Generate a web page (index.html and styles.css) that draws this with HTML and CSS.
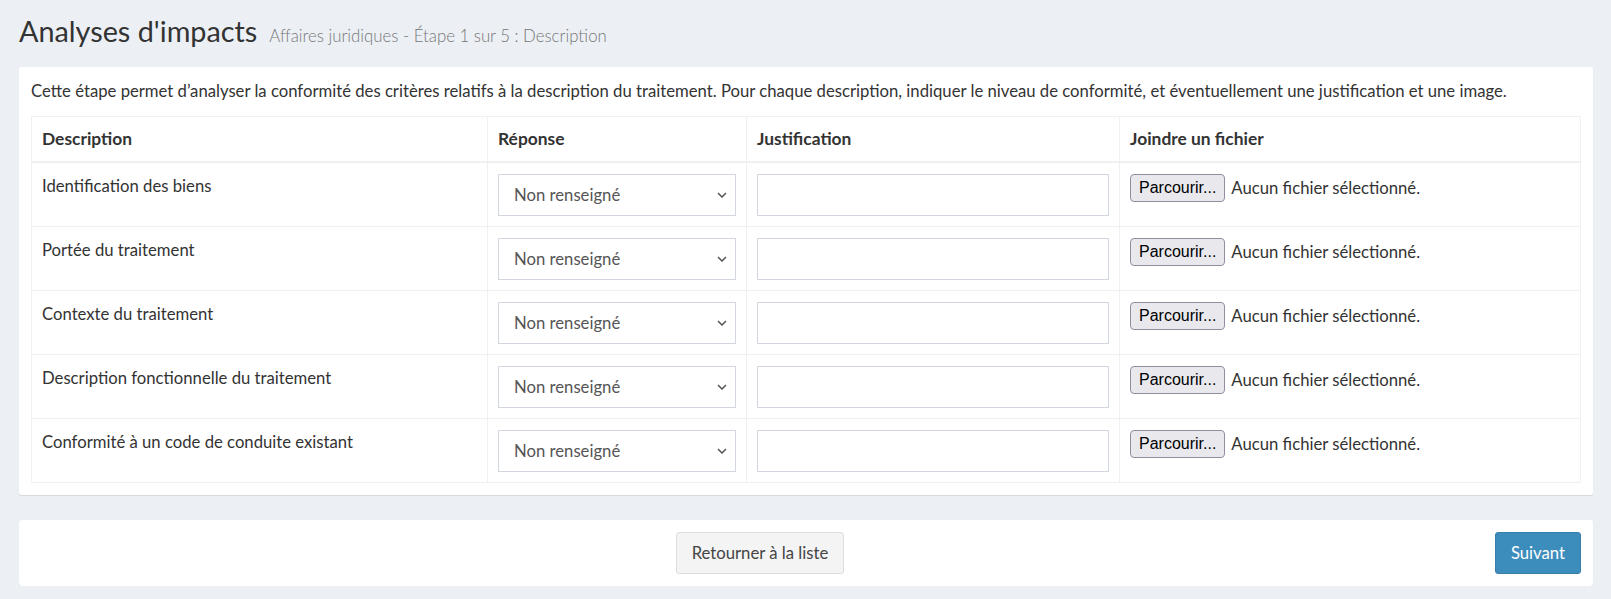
FILE: index.html
```html
<!DOCTYPE html>
<html lang="fr">
<head>
<meta charset="utf-8">
<title>Analyses d'impacts</title>
<link rel="stylesheet" href="styles.css">
</head>
<body>
<div class="page">
  <header class="page-header">
    <h1 class="page-title">Analyses d'impacts</h1>
    <span class="page-subtitle">Affaires juridiques - Étape 1 sur 5 : Description</span>
  </header>

  <section class="box">
    <p class="intro">Cette étape permet d’analyser la conformité des critères relatifs à la description du traitement. Pour chaque description, indiquer le niveau de conformité, et éventuellement une justification et une image.</p>
    <table class="grid">
      <colgroup>
        <col class="col-desc">
        <col class="col-resp">
        <col class="col-just">
        <col>
      </colgroup>
      <thead>
        <tr><th>Description</th><th>Réponse</th><th>Justification</th><th>Joindre un fichier</th></tr>
      </thead>
      <tbody>
        <tr>
          <td>Identification des biens</td>
          <td><div class="select-wrap"><select class="field"><option>Non renseigné</option></select><svg class="chevron" width="10" height="6" viewBox="0 0 10 6"><path d="M1 1l4 4 4-4" fill="none" stroke="#555" stroke-width="1.5"/></svg></div></td>
          <td><input class="field" type="text"></td>
          <td><div class="file"><button class="file-btn" type="button">Parcourir...</button><span class="file-name">Aucun fichier sélectionné.</span></div></td>
        </tr>
        <tr>
          <td>Portée du traitement</td>
          <td><div class="select-wrap"><select class="field"><option>Non renseigné</option></select><svg class="chevron" width="10" height="6" viewBox="0 0 10 6"><path d="M1 1l4 4 4-4" fill="none" stroke="#555" stroke-width="1.5"/></svg></div></td>
          <td><input class="field" type="text"></td>
          <td><div class="file"><button class="file-btn" type="button">Parcourir...</button><span class="file-name">Aucun fichier sélectionné.</span></div></td>
        </tr>
        <tr>
          <td>Contexte du traitement</td>
          <td><div class="select-wrap"><select class="field"><option>Non renseigné</option></select><svg class="chevron" width="10" height="6" viewBox="0 0 10 6"><path d="M1 1l4 4 4-4" fill="none" stroke="#555" stroke-width="1.5"/></svg></div></td>
          <td><input class="field" type="text"></td>
          <td><div class="file"><button class="file-btn" type="button">Parcourir...</button><span class="file-name">Aucun fichier sélectionné.</span></div></td>
        </tr>
        <tr>
          <td>Description fonctionnelle du traitement</td>
          <td><div class="select-wrap"><select class="field"><option>Non renseigné</option></select><svg class="chevron" width="10" height="6" viewBox="0 0 10 6"><path d="M1 1l4 4 4-4" fill="none" stroke="#555" stroke-width="1.5"/></svg></div></td>
          <td><input class="field" type="text"></td>
          <td><div class="file"><button class="file-btn" type="button">Parcourir...</button><span class="file-name">Aucun fichier sélectionné.</span></div></td>
        </tr>
        <tr>
          <td>Conformité à un code de conduite existant</td>
          <td><div class="select-wrap"><select class="field"><option>Non renseigné</option></select><svg class="chevron" width="10" height="6" viewBox="0 0 10 6"><path d="M1 1l4 4 4-4" fill="none" stroke="#555" stroke-width="1.5"/></svg></div></td>
          <td><input class="field" type="text"></td>
          <td><div class="file"><button class="file-btn" type="button">Parcourir...</button><span class="file-name">Aucun fichier sélectionné.</span></div></td>
        </tr>
      </tbody>
    </table>
  </section>

  <section class="box footer-box">
    <div class="footer-center"><button class="btn btn-default" type="button">Retourner à la liste</button></div>
    <button class="btn btn-primary" type="button">Suivant</button>
  </section>
</div>
</body>
</html>
```

FILE: styles.css
```css
* { box-sizing: border-box; }

body {
  margin: 0;
  background: #ecf0f5;
  font-family: Lato, "Liberation Sans", sans-serif;
  font-size: 16.7px;
  color: #333;
}

.page {
  padding: 15px 18px 0 19px;
}

.page-header {
  display: flex;
  align-items: baseline;
  gap: 12px;
  height: 33px;
  margin-bottom: 19px;
}

.page-title {
  margin: 0;
  font-size: 28.8px;
  font-weight: 400;
  line-height: 33px;
  color: #333;
}

.page-subtitle {
  font-size: 16.8px;
  font-weight: 300;
  color: #777;
}

.box {
  background: #fff;
  border-radius: 3px;
  box-shadow: 0 1px 1px rgba(0, 0, 0, 0.1);
  padding: 12px;
  margin-bottom: 25px;
}

.intro {
  margin: 0 0 13px;
  line-height: 24px;
}

.grid {
  width: 100%;
  border-collapse: collapse;
  table-layout: fixed;
  border: 1px solid #f0f0f0;
}

.col-desc { width: 456px; }
.col-resp { width: 259px; }
.col-just { width: 373px; }

.grid th,
.grid td {
  border: 1px solid #f0f0f0;
  text-align: left;
  vertical-align: top;
  line-height: 24px;
}

.grid th {
  padding: 10px 10px;
  font-size: 17.4px;
  font-weight: 700;
  border-bottom-width: 2px;
}

.grid td {
  padding: 11px 10px 10px;
}

.field {
  display: block;
  width: 100%;
  height: 42px;
  margin: 0;
  border: 1px solid #d2d6de;
  border-radius: 0;
  background: #fff;
  font: inherit;
  color: #555;
  padding: 0 30px 0 15px;
  appearance: none;
  -webkit-appearance: none;
  outline: none;
}

.select-wrap {
  position: relative;
}

.chevron {
  position: absolute;
  right: 9px;
  top: 18px;
  pointer-events: none;
}

.file {
  display: flex;
  align-items: center;
  gap: 6px;
}

.file-btn {
  height: 28px;
  padding: 0 8px;
  border: 1px solid #8f8f9d;
  border-radius: 4px;
  background: #e9e9ed;
  color: #000;
  font-family: "Liberation Sans", Arial, sans-serif;
  font-size: 16px;
}

.file-name {
  color: #333;
}

.footer-box {
  display: flex;
  align-items: center;
  gap: 6px;
  margin-bottom: 0;
}

.footer-center {
  flex: 1;
  text-align: center;
}

.btn {
  height: 42px;
  padding: 0 15px;
  border: 1px solid;
  border-radius: 3px;
  font: inherit;
}

.btn-default {
  background: #f4f4f4;
  border-color: #ddd;
  color: #444;
}

.btn-primary {
  background: #3c8dbc;
  border-color: #367fa9;
  color: #fff;
}
```
